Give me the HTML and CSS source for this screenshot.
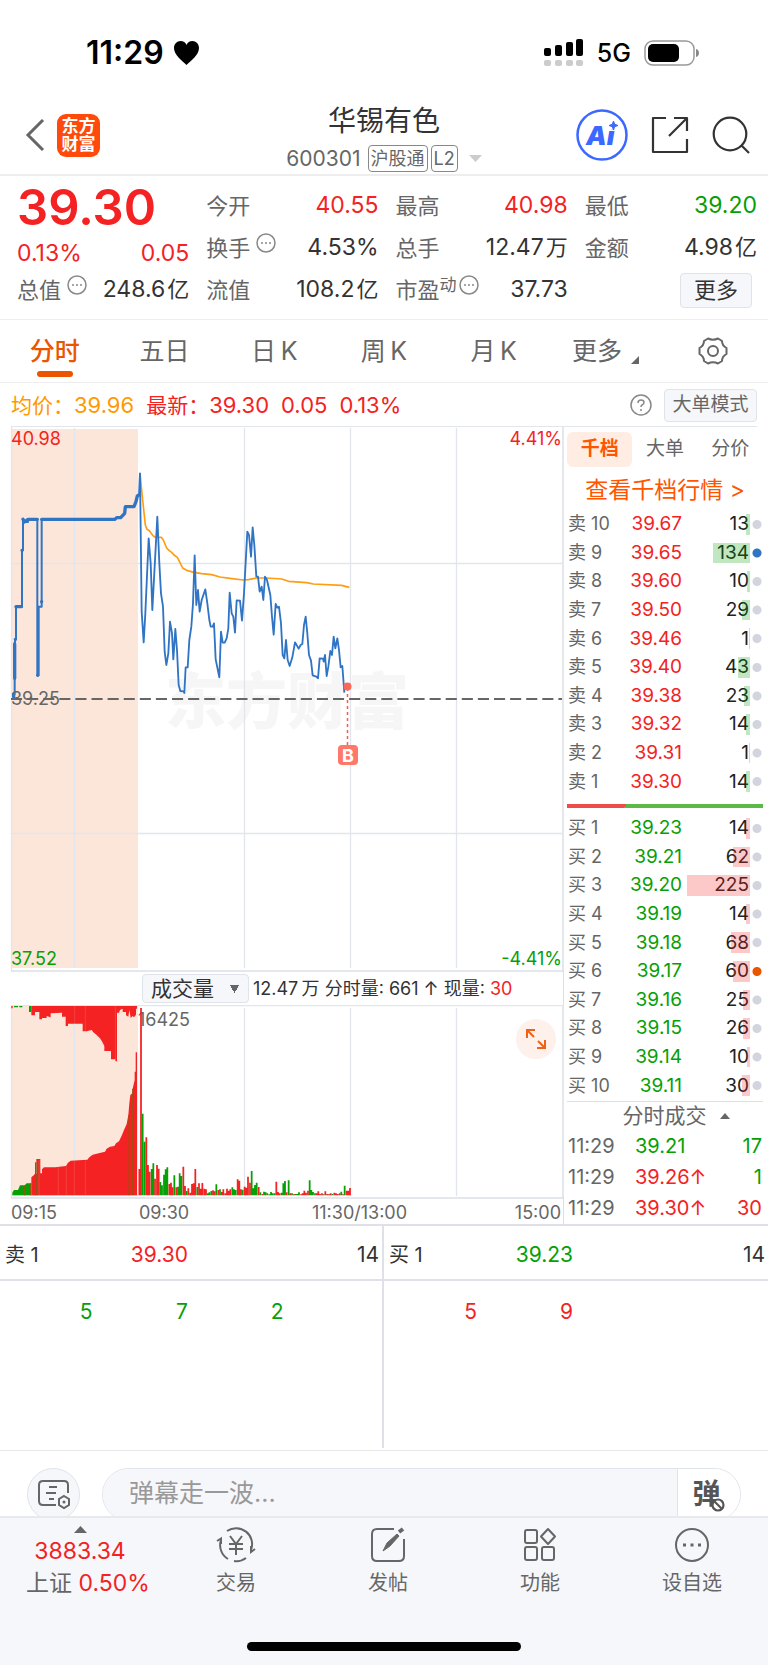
FILE: index.html
```html
<!DOCTYPE html>
<html lang="zh-CN">
<head>
<meta charset="utf-8">
<meta name="viewport" content="width=device-width, initial-scale=1">
<title>华锡有色 600301</title>
<link rel="stylesheet" href="styles.css">
</head>
<body>
<div class="status">
  <div class="status-time">11:29
    <svg width="25" height="24" viewBox="0 0 25 24"><path d="M12.500 24C8 19.500 0 14 0 7C0 3 3 0 6.500 0C9.500 0 11.500 1.500 12.500 4C13.500 1.500 15.500 0 18.500 0C22 0 25 3 25 7C25 14 17 19.500 12.500 24Z"/></svg>
  </div>
  <div class="status-right">
    <svg width="40" height="28" viewBox="0 0 40 28"><g fill="#000"><rect x="0" y="9" width="7" height="8" rx="2"/><rect x="11" y="6" width="7" height="11" rx="2"/><rect x="22" y="3" width="7" height="14" rx="2"/><rect x="32" y="0" width="7" height="17" rx="2"/></g><g fill="#ccc"><rect x="0" y="21" width="7" height="6" rx="2"/><rect x="11" y="21" width="7" height="6" rx="2"/><rect x="22" y="21" width="7" height="6" rx="2"/><rect x="32" y="21" width="7" height="6" rx="2"/></g></svg>
    <span>5G</span>
    <svg width="56" height="26" viewBox="0 0 56 26"><rect x="1" y="1" width="49" height="24" rx="8" fill="none" stroke="#999" stroke-width="1.500"/><rect x="4" y="4" width="31" height="18" rx="5"/><path d="M52 9C56 10 56 16 52 17Z" fill="#888"/></svg>
  </div>
</div>

<header class="header">
  <div class="header-left">
    <button class="icon-btn" aria-label="返回"><svg width="20" height="32" viewBox="0 0 20 32"><path d="M18 1L3 16L18 31" fill="none" stroke="#666" stroke-width="3"/></svg></button>
    <div class="logo"><span>东方</span><span>财富</span></div>
  </div>
  <div class="header-mid">
    <h1>华锡有色</h1>
    <div class="code">600301 <span class="tag">沪股通</span><span class="tag tag-l2">L2</span><svg width="13" height="7" viewBox="0 0 13 7"><path d="M0 0H13L6.500 7Z" fill="#ccc"/></svg></div>
  </div>
  <div class="header-right">
    <button class="icon-btn" aria-label="Ai"><svg width="52" height="52" viewBox="0 0 52 52"><text x="10" y="36" class="ai-text">Ai</text><path d="M31 8H44V20.500H31Z" fill="#fff"/><path d="M37.500 12L38.700 15.300L42 16.500L38.700 17.700L37.500 21L36.300 17.700L33 16.500L36.300 15.300Z" fill="#3b68ff" stroke="#3b68ff"/><circle cx="26" cy="26" r="24.500" fill="none" stroke="#3b68ff" stroke-width="2.500"/></svg></button>
    <button class="icon-btn" aria-label="分享"><svg width="38" height="38" viewBox="0 0 38 38" fill="none" stroke="#333" stroke-width="2.200" stroke-linejoin="round"><path d="M15 2H2V36H36V23M23 2H36V15M18 20L36 2"/></svg></button>
    <button class="icon-btn" aria-label="搜索"><svg width="38" height="38" viewBox="0 0 38 38" fill="none" stroke="#333" stroke-width="2.200"><circle cx="18" cy="18" r="16.300"/><path d="M29 29L37 37"/></svg></button>
  </div>
</header>

<section class="quote">
  <div class="quote-main red">
    <div class="price">39.30</div>
    <div class="pair"><span>0.13%</span><span>0.05</span></div>
    <div class="pair"><span class="k">总值<svg class="dots" viewBox="0 0 20 20"><circle cx="10" cy="10" r="9"/><path d="M5 10h2M9 10h2M13 10h2"/></svg></span><span class="v">248.6<i>亿</i></span></div>
  </div>
  <div class="quote-col">
    <div class="pair"><span class="k">今开</span><span class="red">40.55</span></div>
    <div class="pair"><span class="k">换手<svg class="dots" viewBox="0 0 20 20"><circle cx="10" cy="10" r="9"/><path d="M5 10h2M9 10h2M13 10h2"/></svg></span><span class="v">4.53%</span></div>
    <div class="pair"><span class="k">流值</span><span class="v">108.2<i>亿</i></span></div>
  </div>
  <div class="quote-col">
    <div class="pair"><span class="k">最高</span><span class="red">40.98</span></div>
    <div class="pair"><span class="k">总手</span><span class="v">12.47<i>万</i></span></div>
    <div class="pair"><span class="k">市盈<sup>动</sup><svg class="dots dots-tight" viewBox="0 0 20 20"><circle cx="10" cy="10" r="9"/><path d="M5 10h2M9 10h2M13 10h2"/></svg></span><span class="v">37.73</span></div>
  </div>
  <div class="quote-col">
    <div class="pair"><span class="k">最低</span><span class="green">39.20</span></div>
    <div class="pair"><span class="k">金额</span><span class="v">4.98<i>亿</i></span></div>
    <div class="pair pair-end"><button class="more-btn">更多</button></div>
  </div>
</section>

<nav class="tabs">
  <button class="tab tab-on">分时</button>
  <button class="tab">五日</button>
  <button class="tab">日&thinsp;K</button>
  <button class="tab">周&thinsp;K</button>
  <button class="tab">月&thinsp;K</button>
  <button class="tab tab-more">更多<svg width="8" height="8" viewBox="0 0 8 8"><path d="M8 0V8H0Z" fill="#666"/></svg></button>
  <button class="tab" aria-label="设置"><svg width="30" height="28" viewBox="0 0 30 28" fill="none" stroke="#666" stroke-width="2" stroke-linejoin="round"><path d="M10 1.500Q15 4 20 1.500L24 4Q24 8.500 28.500 11V17Q24 19.500 24 24L20 26.500Q15 24 10 26.500L6 24Q6 19.500 1.500 17V11Q6 8.500 6 4Z"/><circle cx="15" cy="14" r="5"/></svg></button>
</nav>

<div class="info">
  <span class="orange">均价：<b>39.96</b></span>
  <span class="red">最新：<b>39.30</b></span>
  <span class="red"><b>0.05</b></span>
  <span class="red"><b>0.13%</b></span>
  <svg class="help" width="22" height="22" viewBox="0 0 22 22"><circle cx="11" cy="11" r="10" fill="none" stroke="#888" stroke-width="1.500"/><path d="M8 9Q8 6 11 6Q14 6 14 8.500Q14 10 12 11Q11 11.500 11 13M11 15V17" fill="none" stroke="#888" stroke-width="1.500"/></svg>
  <button class="mode-btn">大单模式</button>
</div>

<main class="board">
  <div class="charts">
    <svg class="plot" viewBox="0 427 564 545">
      <path d="M11 429H138V968H11Z" fill="#fce6da"/>
      <text x="165" y="724" class="watermark">东方财富</text>
      <path d="M11.500 427V971M74.500 428V968M244.500 428V968M350.500 428V968M456.500 428V968M11 563.500H562M11 833.500H562" stroke="#e2e5ec" stroke-width="1.300" fill="none"/>
      <path d="M11 971H564M563 427V972" stroke="#dcdfe5" stroke-width="1.500"/>
      <path d="M11 699H562" stroke="#666" stroke-width="2" stroke-dasharray="11.100 5"/>
      <g transform="translate(0 420) scale(.33333)" fill="none" stroke-linejoin="round">
        <path stroke="#ff9d12" stroke-width="5" d="M420 160L428 240L436 315L441 328L448 332L458 346L464 351L484 352L490 360L500 384L507 391L515 397L522 405L532 412L540 428L548 444L560 451L582 457L605 461L635 464L660 471L690 475L730 480L745 479L770 474L800 474L845 477L866 484L920 488L940 492L1025 496L1048 502"/>
        <path stroke="#3074c4" stroke-width="6" d="M41 836V822H44V775V672L46 658H48V560H66V391H69V298L73 306H84V298H112V766H116V560H125V545V298"/>
        <path stroke="#3074c4" stroke-width="10" stroke-linecap="round" d="M125 298H345L350 293H362L374 280L376 260H402L408 245L412 228L417 225M69 298L73 306L84 298H112M48 560H64M44 672V775M66 391V391M46 658V658M113 766V766M125 545V545M41 822V830"/>
        <path stroke="#3074c4" stroke-width="5.500" d="M417 225L420 160L425 575L431 667L436 580L446 355L452 430L457 570L472 290L478 430L483 520L489 560L494 695L499 735L505 700L510 605L516 640L520 718L526 627L531 690L536 795L541 813L551 814L553 819L557 742H563L568 660L574 620L579 550L584 406L589 555L594 510L599 575L605 540L616 508L622 550L628 600L632 620H638L642 610L647 718L658 772L663 635L668 668H674L680 655L685 625L689 518L695 580L700 590L705 638L710 541L720 542L726 602L732 520L742 335L747 345L753 410L758 322L763 375L769 470H774L779 515L785 500L790 540L795 470L801 480L811 525L816 590L821 644L827 552L832 563L837 560L843 610L848 705L853 715L858 660L863 720L869 738L877 712L885 667L896 686L902 675L907 672L912 615L917 590L922 640L927 705L933 722L938 766L949 770L954 775L959 715L969 716L971 725L975 705L980 768L985 740L991 693L996 705L1001 650L1006 685L1012 655L1017 690L1022 742L1027 738L1033 818"/>
      </g>
      <path d="M347.500 688V745" stroke="#f65c4c" stroke-width="1.500" stroke-dasharray="3 3"/>
      <circle cx="347.500" cy="686.500" r="4" fill="#f9695b"/>
      <rect x="338" y="745" width="20" height="20" rx="4" fill="#ff7868"/>
      <text x="348" y="762" class="mark-b">B</text>
      <text x="11" y="445" class="axis fill-red">40.98</text>
      <text x="11" y="705" class="axis">39.25</text>
      <text x="11" y="965" class="axis fill-green">37.52</text>
      <text x="562" y="445" class="axis end fill-red">4.41%</text>
      <text x="562" y="965" class="axis end fill-green">-4.41%</text>
    </svg>
    <div class="vol-head">
      <select class="vol-select" aria-label="指标"><option>成交量</option></select>
      <span>12.47&thinsp;万 分时量: 661 ↑ 现量: <b>30</b></span>
    </div>
    <div class="vol-plot">
      <svg class="plot" viewBox="0 1005 564 194">
        <path d="M11 1006H138V1196H11Z" fill="#fce6da"/>
        <path d="M11.500 1006V1198M74.500 1008V1196M244.500 1008V1196M350.500 1008V1196M456.500 1008V1196M11 1005.500H562" stroke="#e2e5ec" stroke-width="1.300"/>
        <path d="M11 1198H564M563 1005V1199" stroke="#dcdfe5" stroke-width="1.500"/>
        <text x="138" y="1026" class="axis">16425</text>
        <g transform="translate(0 1000) scale(.33333)">
          <path fill="#f42222" d="M34 18H38V25H34ZM94 18V46H105V36H118V58H126V54H140V48L152 52V40L186 38V50H197V78H204V71H248V94H260L275 90L280 97L290 105L300 115L307 126L313 138V153H333V178H346V184H351V38H357L360 30L368 26V36H378V46L385 50L388 30L392 54L398 48L402 52L408 44V26H411V18ZM94 586V532L103 524V522H109V477H121V520H126V508L132 502H165L198 498L204 488L212 482L262 479L268 472L278 464L296 460L315 455L320 446L330 440L343 438L348 430L357 424L366 405L372 390L380 372L385 345L388 310L391 285L397 280L399 262L404 240V215H407V157H411V586Z"/>
          <path fill="#05a005" d="M42 18H54V22H42ZM58 18H67V22H58ZM87 18H94V36H87ZM37 586V578L42 570H54L60 556H74L80 550H94V586ZM105 586V487H109V586Z"/>
          <path stroke="#985510" stroke-width="3" d="M387 586V345M398 586V266M74 586V557M92 586V550M113 586V482"/>
          <path stroke="#fff" stroke-opacity=".200" stroke-width="2" d="M223 586V482M256 586V482M117 586V480M175 586V500M199 586V499M224 18V71M256 18V93M346 18V180"/>
          <path stroke="#f42222" stroke-width="5.300" d="M418 586V507M423 586V24M439 586V412M444 586V495M449 586V515M465 586V536M471 586V495M476 586V506M508 586V552M513 586V548M518 586V562M529 586V562M550 586V500M555 586V558M565 586V565M571 586V578M576 586V552M581 586V550M586 586V507M597 586V550M602 586V566M607 586V549M613 586V566M618 586V568M639 586V571M644 586V574M655 586V570M665 586V576M670 586V568M676 586V580M681 586V566M686 586V572M691 586V568M713 586V538M718 586V542M723 586V568M734 586V560M739 586V563M744 586V530M750 586V548M776 586V561M787 586V582M802 586V580M829 586V545M834 586V576M839 586V580M860 586V577M871 586V580M882 586V582M903 586V583M908 586V580M913 586V572M918 586V578M924 586V572M950 586V580M955 586V574M960 586V582M966 586V580M976 586V574M982 586V582M987 586V583M992 586V580M1003 586V578M1008 586V580M1013 586V582M1019 586V580M1029 586V583M1040 586V572M1045 586V572M1050 586V564"/>
          <path stroke="#05a005" stroke-width="5.300" d="M428 586V341M434 586V425M455 586V507M460 586V490M481 586V546M486 586V556M492 586V524M497 586V508M502 586V502M523 586V526M534 586V560M539 586V520M544 586V528M560 586V573M592 586V561M623 586V580M628 586V577M634 586V573M649 586V553M660 586V568M697 586V562M702 586V568M707 586V570M728 586V569M755 586V513M760 586V565M765 586V555M770 586V548M781 586V577M792 586V575M797 586V577M808 586V583M813 586V576M818 586V580M824 586V580M845 586V578M850 586V550M855 586V543M866 586V541M876 586V580M887 586V582M892 586V582M897 586V577M929 586V541M934 586V570M939 586V576M945 586V580M971 586V583M997 586V582M1024 586V575M1034 586V557"/>
        </g>
      </svg>
      <button class="expand" aria-label="全屏"><svg width="22" height="22" viewBox="0 0 22 22" fill="none" stroke="#f0621c" stroke-width="2"><path d="M2 10V2H10M2 2L9 9M20 12V20H12M20 20L13 13"/></svg></button>
    </div>
    <div class="times"><span>09:15</span><span>09:30</span><span>11:30/13:00</span><span>15:00</span></div>
  </div>

  <aside class="book">
    <div class="book-tabs"><button class="book-tab book-tab-on">千档</button><button class="book-tab">大单</button><button class="book-tab">分价</button></div>
    <a class="book-link" href="#">查看千档行情 &gt;</a>
    <table class="levels sell">
      <tr><th>卖 10</th><td>39.67</td><td class="vol">13<i style="width:4px"></i></td><td class="dot"></td></tr>
      <tr><th>卖 9</th><td>39.65</td><td class="vol">134<i style="width:37px"></i></td><td class="dot dot-blue"></td></tr>
      <tr><th>卖 8</th><td>39.60</td><td class="vol">10<i style="width:3px"></i></td><td class="dot"></td></tr>
      <tr><th>卖 7</th><td>39.50</td><td class="vol">29<i style="width:8px"></i></td><td class="dot"></td></tr>
      <tr><th>卖 6</th><td>39.46</td><td class="vol">1<i style="width:1px"></i></td><td class="dot"></td></tr>
      <tr><th>卖 5</th><td>39.40</td><td class="vol">43<i style="width:12px"></i></td><td class="dot"></td></tr>
      <tr><th>卖 4</th><td>39.38</td><td class="vol">23<i style="width:6px"></i></td><td class="dot"></td></tr>
      <tr><th>卖 3</th><td>39.32</td><td class="vol">14<i style="width:4px"></i></td><td class="dot"></td></tr>
      <tr><th>卖 2</th><td>39.31</td><td class="vol">1<i style="width:1px"></i></td><td class="dot"></td></tr>
      <tr><th>卖 1</th><td>39.30</td><td class="vol">14<i style="width:4px"></i></td><td class="dot"></td></tr>
    </table>
    <div class="ratio"></div>
    <table class="levels buy">
      <tr><th>买 1</th><td>39.23</td><td class="vol">14<i style="width:4px"></i></td><td class="dot"></td></tr>
      <tr><th>买 2</th><td>39.21</td><td class="vol">62<i style="width:17px"></i></td><td class="dot"></td></tr>
      <tr><th>买 3</th><td>39.20</td><td class="vol">225<i style="width:63px"></i></td><td class="dot"></td></tr>
      <tr><th>买 4</th><td>39.19</td><td class="vol">14<i style="width:4px"></i></td><td class="dot"></td></tr>
      <tr><th>买 5</th><td>39.18</td><td class="vol">68<i style="width:19px"></i></td><td class="dot"></td></tr>
      <tr><th>买 6</th><td>39.17</td><td class="vol">60<i style="width:17px"></i></td><td class="dot dot-orange"></td></tr>
      <tr><th>买 7</th><td>39.16</td><td class="vol">25<i style="width:7px"></i></td><td class="dot"></td></tr>
      <tr><th>买 8</th><td>39.15</td><td class="vol">26<i style="width:7px"></i></td><td class="dot"></td></tr>
      <tr><th>买 9</th><td>39.14</td><td class="vol">10<i style="width:3px"></i></td><td class="dot"></td></tr>
      <tr><th>买 10</th><td>39.11</td><td class="vol">30<i style="width:8px"></i></td><td class="dot"></td></tr>
    </table>
    <button class="deals-head">分时成交<svg width="10" height="6" viewBox="0 0 10 6"><path d="M5 0L10 6H0Z" fill="#666"/></svg></button>
    <table class="deals">
      <tr><th>11:29</th><td class="green">39.21</td><td class="green">17</td></tr>
      <tr><th>11:29</th><td class="red">39.26↑</td><td class="green">1</td></tr>
      <tr><th>11:29</th><td class="red">39.30↑</td><td class="red">30</td></tr>
    </table>
  </aside>
</main>

<section class="queue">
  <div class="queue-side">
    <div class="queue-row queue-top"><span class="first">卖 1</span><span class="red">39.30</span><span></span><span>14</span></div>
    <div class="queue-row green"><span>5</span><span>7</span><span>2</span></div>
  </div>
  <div class="queue-side">
    <div class="queue-row queue-top"><span class="first">买 1</span><span class="green">39.23</span><span></span><span>14</span></div>
    <div class="queue-row red"><span>5</span><span>9</span></div>
  </div>
</section>

<div class="comment">
  <button class="note" aria-label="弹幕设置"><svg width="34" height="32" viewBox="0 0 34 32" fill="none" stroke="#666" stroke-width="2"><path d="M19 26H6Q2 26 2 22V6Q2 2 6 2H27Q31 2 31 6V14M12 8H20M9 14H19M12 20H17"/><path d="M27 17L32 20V26L27 29L22 26V20Z"/><circle cx="27" cy="23" r="1.500" fill="#666" stroke="none"/></svg></button>
  <div class="field">
    <input type="text" placeholder="弹幕走一波..." aria-label="弹幕">
    <button class="danmu" aria-label="关闭弹幕"><span>弹</span><svg width="14" height="14" viewBox="0 0 14 14"><circle cx="7" cy="7" r="5.500" fill="#fff" stroke="#555" stroke-width="2.200"/><path d="M3 3L11 11" stroke="#555" stroke-width="2.200"/></svg></button>
  </div>
</div>

<nav class="bottom">
  <div class="bottom-items">
    <button class="index">
      <svg width="13" height="7" viewBox="0 0 13 7"><path d="M6.500 0L13 7H0Z" fill="#666"/></svg>
      <span class="red">3883.34</span>
      <span class="index-name">上证 <b class="red">0.50%</b></span>
    </button>
    <button class="item"><svg width="40" height="36" viewBox="0 0 40 36" fill="none" stroke="#666" stroke-width="2"><path d="M12 32A16 16 0 0 1 5 13M1 14L5 11.500V17M11 4A16 16 0 0 1 35 23M39 22L35 25V19M30 31A16 16 0 0 1 18 34M14 9L20 17L26 9M13 17H27M13 22H27M20 17V28"/></svg>交易</button>
    <button class="item"><svg width="36" height="36" viewBox="0 0 36 36" fill="none" stroke="#666" stroke-width="2"><path d="M24 2H7Q2 2 2 7V29Q2 34 7 34H29Q34 34 34 29V12"/><path d="M13 24L17 16L27 7L29 9L20 19Z" fill="#666" stroke-width="1"/><path d="M29 5L33 2" stroke-width="4"/></svg>发帖</button>
    <button class="item"><svg width="34" height="36" viewBox="0 0 34 36" fill="none" stroke="#666" stroke-width="2"><rect x="2" y="3" width="12" height="13" rx="2"/><rect x="2" y="20" width="12" height="13" rx="2"/><rect x="19" y="20" width="12" height="13" rx="2"/><path d="M25 2L32 9.500L25 17L18 9.500Z" stroke-linejoin="round"/></svg>功能</button>
    <button class="item"><svg width="36" height="36" viewBox="0 0 36 36" fill="none" stroke="#666" stroke-width="2"><circle cx="18" cy="18" r="16"/><path d="M9 18h3M16.500 18h3M24 18h3" stroke-width="3"/></svg>设自选</button>
  </div>
  <div class="home"></div>
</nav>
</body>
</html>
```

FILE: styles.css
```css
* { box-sizing: border-box; }
body { margin: 0; background: #fff; color: #333; font-family: Inter, "Noto Sans CJK SC", sans-serif; font-size: 20px; line-height: 1.2; }
button { border: 0; background: none; padding: 0; margin: 0; font: inherit; color: inherit; }
svg { display: block; flex: none; }
i { font-style: normal; }
b { font-weight: 400; }
.red { color: #f42222; }
.green { color: #05a005; }
.orange { color: #ff9900; }

.status { height: 88px; padding: 18px 68px 0 86px; display: flex; align-items: center; justify-content: space-between; color: #000; }
.status-time { display: flex; align-items: center; gap: 10px; font-size: 32px; font-weight: 600; }
.status-right { display: flex; align-items: center; gap: 13px; font-size: 25px; font-weight: 500; }

.header { height: 88px; padding: 0 18px; display: grid; grid-template-columns: 1fr auto 1fr; align-items: center; border-bottom: 2px solid #eee; }
.header-left, .header-right { display: flex; align-items: center; padding-top: 8px; }
.header-left { gap: 12px; padding-left: 7px; }
.header-right { gap: 23px; justify-content: flex-end; }
.ai-text { font-size: 26px; font-weight: 900; font-style: italic; fill: #3b68ff; }
.logo { width: 43px; height: 43px; border-radius: 9px; background: #ff4a0c; color: #fff; font-size: 17px; line-height: 18px; font-weight: 700; display: flex; flex-direction: column; align-items: center; justify-content: center; }
.header-mid { display: flex; flex-direction: column; align-items: center; gap: 6px; padding-top: 13px; }
h1 { margin: 0; font-size: 28px; line-height: 36px; font-weight: 400; }
.code { display: flex; align-items: center; color: #666; font-size: 21px; line-height: 26px; gap: 3px; }
.tag { border: 1px solid #888; border-radius: 4px; font-size: 18px; line-height: 25px; padding: 0 2px; margin-left: 4px; }
.tag-l2 { margin-left: 0; margin-right: 8px; }

.quote { padding: 9px 11px 8px 17px; display: grid; grid-template-columns: repeat(4, 1fr); column-gap: 17px; font-size: 23px; border-bottom: 1px solid #eee; }
.price { height: 54px; line-height: 46px; font-size: 49px; font-weight: 600; }
.pair { height: 42px; display: flex; align-items: center; justify-content: space-between; }
.quote-main .pair:nth-child(2) { height: 30px; }
.pair-end { justify-content: flex-end; padding-right: 5px; }
.k { color: #666; font-size: 22px; display: flex; align-items: center; }
.k sup { font-size: 17px; line-height: 20px; align-self: flex-start; }
.v { color: #333; }
.v i { margin-left: 2px; font-size: 22px; }
.dots { width: 20px; height: 20px; margin: 0 0 10px 6px; fill: none; stroke: #888; stroke-width: 1.500; }
.dots-tight { margin-left: 2px; }
.more-btn { width: 72px; height: 35px; border: 1px solid #dfe3ea; border-radius: 4px; background: #f6f7fa; font-size: 22px; }

.tabs { height: 63px; display: grid; grid-template-columns: repeat(7, 1fr); border-bottom: 1px solid #eee; color: #666; font-size: 25px; }
.tab { position: relative; display: flex; align-items: center; justify-content: center; gap: 9px; }
.tab-more { padding-left: 4px; }
.tab-more svg { align-self: flex-end; margin-bottom: 18px; }
.tab-on { color: #eb5500; font-weight: 500; }
.tab-on::after { content: ""; position: absolute; left: 50%; bottom: 5px; width: 36px; height: 6px; margin-left: -18px; border-radius: 3px; background: #eb5500; }

.info { height: 44px; margin: 0 11px; padding-top: 1px; display: flex; align-items: center; gap: 12px; font-size: 21px; border-bottom: 1px solid #e2e5ec; }
.info b { font-size: 22px; }
.help { margin-left: auto; }
.mode-btn { width: 93px; height: 33px; border: 1px solid #dfe3ea; border-radius: 4px; background: #f6f7fa; color: #666; font-size: 19px; }

.board { display: grid; grid-template-columns: 1fr 204px; border-bottom: 2px solid #dfe0e8; }
.charts { min-width: 0; }
.plot { width: 100%; height: auto; }
.axis { font-size: 18px; fill: #666; }
.axis.fill-red { fill: #f42222; }
.axis.fill-green { fill: #05a005; }
.end { text-anchor: end; }
.watermark { font-size: 61px; font-weight: 900; fill: #f6f6f6; }
.mark-b { font-size: 18px; font-weight: 700; fill: #fff; text-anchor: middle; }
.vol-head { height: 33px; padding-left: 142px; display: flex; align-items: center; gap: 4px; font-size: 18px; border-right: 1px solid #dcdfe5; white-space: nowrap; }
.vol-head b { color: #f42222; }
.vol-select { appearance: none; width: 107px; height: 29px; border: 1px solid #dfe3ea; border-radius: 4px; padding: 0 0 0 8px; font: inherit; font-size: 21px; line-height: 27px; color: #333; background: #f6f7fa conic-gradient(from -30deg at 50% 100%, #666 60deg, transparent 0) no-repeat 87px 10px / 9px 8px; }
.vol-plot { position: relative; }
.expand { position: absolute; right: 8px; top: 14px; width: 40px; height: 40px; border-radius: 50%; background: #fef0ea; display: flex; align-items: center; justify-content: center; }
.times { height: 25px; padding: 2px 2px 0 11px; display: grid; grid-template-columns: 128px 160px 1fr 141px; align-items: center; font-size: 18px; color: #666; border-right: 1px solid #dcdfe5; }
.times span:nth-child(3) { text-align: center; }
.times span:nth-child(4) { text-align: right; }

.book { padding: 5px 5px 0 3px; }
.book-tabs { display: grid; grid-template-columns: repeat(3, 1fr); height: 35px; font-size: 19px; color: #666; }
.book-tab-on { background: #ffece3; border-radius: 6px; color: #ff5500; font-weight: 700; }
.book-link { display: block; height: 43px; line-height: 47px; text-align: center; font-size: 23px; color: #ff5500; text-decoration: none; }
table { border-spacing: 0; width: 100%; }
th, td { padding: 0; font-weight: 400; line-height: 22px; }
th { text-align: left; color: #666; }
.levels { height: 286px; table-layout: fixed; font-size: 19px; text-align: right; }
.levels th { width: 46px; padding-left: 1px; font-size: 18px; }
.sell td { color: #f42222; }
.buy td { color: #05a005; }
.levels .vol { width: 68px; color: #222; position: relative; padding-right: 1px; }
.vol i { position: absolute; right: 0; top: 4px; bottom: 4px; background: rgba(5, 160, 5, .25); }
.buy .vol i { background: rgba(244, 34, 34, .25); }
.dot { width: 13px; background: radial-gradient(circle at 7px 50%, #d2d5dd 4px, transparent 5px); }
.dot-blue { background: radial-gradient(circle at 7px 50%, #3074c4 4px, transparent 5px); }
.dot-orange { background: radial-gradient(circle at 7px 50%, #eb5500 4px, transparent 5px); }
.ratio { height: 4px; margin: 8px 0 6px; background: linear-gradient(120deg, #ee4b4b 30%, #5bba47 0); }
.deals-head { width: 100%; height: 29px; margin-top: 1px; padding-left: 22px; border-top: 1px solid #dcdfe5; display: flex; align-items: center; justify-content: center; gap: 13px; font-size: 21px; color: #666; }
.deals { height: 93px; font-size: 20px; text-align: right; }
.deals th { width: 68px; padding-left: 1px; }
.deals td:nth-child(2) { text-align: left; }
.deals td:last-child { padding-right: 1px; }

.queue { display: grid; grid-template-columns: 1fr 1fr; height: 222px; font-size: 21px; }
.queue-side:first-child { border-right: 2px solid #dfe0e8; }
.queue-row { height: 62px; display: grid; grid-template-columns: repeat(4, 1fr); align-items: center; text-align: right; }
.queue-row span { padding-right: 3px; }
.queue-top { height: 55px; padding-top: 4px; border-bottom: 2px solid #dfe0e8; }
.queue-row .first { text-align: left; padding-left: 5px; font-size: 20px; }

.comment { margin-top: 2px; height: 66px; overflow: hidden; padding: 17px 27px 0; display: flex; gap: 22px; border-top: 1px solid #e8e8e8; }
.note { width: 53px; height: 53px; flex: none; border: 1px solid #dfe3ea; border-radius: 50%; background: #f6f7fa; display: flex; align-items: center; justify-content: center; }
.field { flex: 1; height: 53px; display: flex; border: 1px solid #dfe3ea; border-radius: 27px; overflow: hidden; }
.field input { flex: 1; min-width: 0; border: 0; padding: 0 0 4px 26px; background: #f6f7fa; font: inherit; font-size: 25px; }
.field input::placeholder { color: #999; }
.danmu { width: 63px; border-left: 1px solid #dfe3ea; background: #fff; position: relative; font-size: 28px; font-weight: 700; color: #555; padding-right: 5px; }
.danmu svg { position: absolute; right: 15px; bottom: 8px; }

.bottom { background: #f6f7fa; border-top: 2px solid #e8e9ec; height: 149px; display: flex; flex-direction: column; justify-content: space-between; align-items: center; padding: 8px 0 14px; color: #666; }
.bottom-items { width: 100%; display: grid; grid-template-columns: 160px repeat(4, 1fr); }
.index { display: flex; flex-direction: column; align-items: center; font-size: 23px; line-height: 32px; white-space: pre; }
.index svg { margin-bottom: 2px; }
.index-name { padding-left: 16px; }
.item { display: flex; flex-direction: column; align-items: center; gap: 6px; line-height: 28px; padding-top: 1px; font-size: 20px; }
.home { width: 274px; height: 9px; border-radius: 5px; background: #000; }
```
